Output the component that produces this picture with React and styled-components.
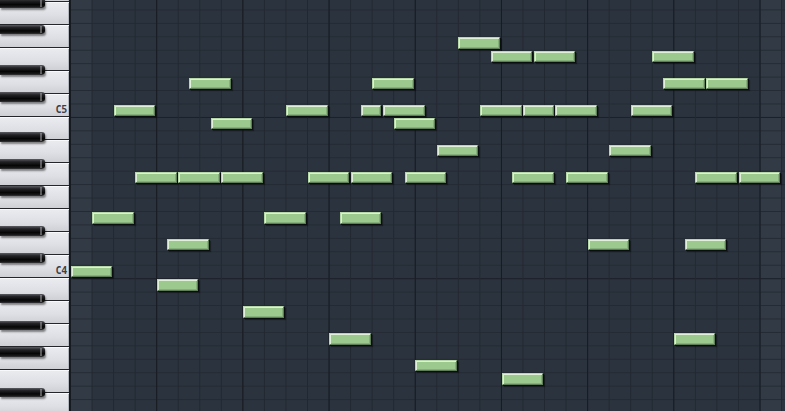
import React from 'react'
import styled, { createGlobalStyle } from 'styled-components'

// piano roll geometry, in px
const ROW = 13.44
const COL = 21.55
const TOP = -4 // top edge of the first (G#5) row
const OCTAVE = ROW * 12
const BLACK_ROWS = [1, 3, 5, 8, 10]
const WHITE_NAMES = ['B', 'A', 'G', 'F', 'E', 'D', 'C']

// [column, row, length in columns]
const notes = [
  [18, 3, 2],
  [19.5, 4, 2], [21.5, 4, 2], [27, 4, 2],
  [5.5, 6, 2], [14, 6, 2], [27.5, 6, 2], [29.5, 6, 2],
  [2, 8, 2], [10, 8, 2], [13.5, 8, 1], [14.5, 8, 2], [19, 8, 2], [21, 8, 1.5], [22.5, 8, 2], [26, 8, 2],
  [6.5, 9, 2], [15, 9, 2],
  [17, 11, 2], [25, 11, 2],
  [3, 13, 2], [5, 13, 2], [7, 13, 2], [11, 13, 2], [13, 13, 2], [15.5, 13, 2], [20.5, 13, 2], [23, 13, 2], [29, 13, 2], [31, 13, 2],
  [1, 16, 2], [9, 16, 2], [12.5, 16, 2],
  [4.5, 18, 2], [24, 18, 2], [28.5, 18, 2],
  [0, 20, 2],
  [4, 21, 2],
  [8, 23, 2],
  [12, 25, 2], [28, 25, 2],
  [16, 27, 2],
  [20, 28, 2],
]

const GlobalStyle = createGlobalStyle`
  html, body {
    margin: 0;
    padding: 0;
    background: #2b333e;
    overflow: hidden;
  }

  #root {
    width: 785px;
    height: 411px;
  }
`

const Roll = styled.div`
  display: flex;
  width: 785px;
  height: 411px;
  overflow: hidden;
  font-family: 'DejaVu Sans Mono', 'Liberation Mono', monospace;
`

const Keyboard = styled.div`
  flex: 0 0 69px;
  display: flex;
  flex-direction: column;
  overflow: hidden;
  border-right: 1px solid #15191e;
  background: #dcdde2;
`

const Octave = styled.div`
  position: relative;
  flex: 0 0 ${OCTAVE}px;
  display: flex;
  flex-direction: column;

  &:first-child {
    margin-top: ${TOP - 3 * ROW}px;
  }
`

const WhiteKey = styled.div`
  flex: 1;
  display: flex;
  align-items: flex-end;
  justify-content: flex-end;
  padding: 0 2px 1px 0;
  box-sizing: border-box;
  background: linear-gradient(to bottom, #ebecf0 0%, #dedfe4 60%, #cfd0d6 100%);
  border-bottom: 1px solid #24262b;
  box-shadow: inset 0 1px 0 #f8f9fb, inset -1px 0 0 #b5b7be;
`

const KeyLabel = styled.span`
  font-size: 10px;
  font-weight: bold;
  line-height: 1;
  letter-spacing: -0.3px;
  color: #3c3f48;
`

const BlackKey = styled.div`
  position: absolute;
  left: 0;
  top: ${p => p.$row * ROW + 2}px;
  width: 45px;
  height: 9.5px;
  border-radius: 0 3px 3px 0;
  background: linear-gradient(
    to bottom,
    #5c5d62 0%,
    #232326 28%,
    #060606 65%,
    #19191b 88%,
    #3a3a3e 100%
  );
  box-shadow: 1px 2px 2px rgba(0, 0, 0, 0.45);

  &::after {
    content: '';
    position: absolute;
    right: 3px;
    top: 1px;
    bottom: 1px;
    width: 2px;
    background: rgba(190, 190, 196, 0.45);
  }
`

const Grid = styled.div`
  position: relative;
  flex: 1;
  background-color: #2b333e;
  background-image:
    linear-gradient(to right, #161b21 1px, transparent 1px),
    linear-gradient(to right, #212830 1px, transparent 1px),
    linear-gradient(to bottom, #1c2128 1px, transparent 1px),
    linear-gradient(to bottom, #232a33 1px, transparent 1px),
    linear-gradient(to right, rgba(255, 255, 255, 0.035) ${COL}px, transparent ${COL}px);
  background-size:
    ${COL * 4}px 100%,
    ${COL}px 100%,
    100% ${OCTAVE}px,
    100% ${ROW}px,
    ${COL * 32}px 100%;
  background-position:
    0 0,
    0 0,
    0 ${TOP + 9 * ROW}px,
    0 ${TOP}px,
    0 0;
`

const Note = styled.div`
  position: absolute;
  left: ${p => 0.5 + p.$col * COL}px;
  top: ${p => TOP + p.$row * ROW + 1}px;
  width: ${p => p.$len * COL - 1.5}px;
  height: 11.5px;
  box-sizing: border-box;
  background: #9cca8e;
  border: 1px solid #5f7d58;
  border-top-color: #b7d7aa;
  border-left-color: #b7d7aa;
  box-shadow:
    inset 1px 1px 0 #e0f0d8,
    inset -1px -1px 0 #86b079,
    1px 1px 0 #0c0f12,
    2px 2px 1px rgba(0, 0, 0, 0.35);
`

// the C key of the lowest octave lies below the window, so it gets no label
const OctaveKeys = ({ label }) => (
  <Octave>
    {WHITE_NAMES.map(name => (
      <WhiteKey key={name}>
        {name === 'C' && label && <KeyLabel>{label}</KeyLabel>}
      </WhiteKey>
    ))}
    {BLACK_ROWS.map(row => (
      <BlackKey key={row} $row={row} />
    ))}
  </Octave>
)

const App = () => (
  <>
    <GlobalStyle />
    <Roll>
      <Keyboard>
        <OctaveKeys label="C5" />
        <OctaveKeys label="C4" />
        <OctaveKeys />
      </Keyboard>
      <Grid>
        {notes.map(([col, row, len], i) => (
          <Note key={i} $col={col} $row={row} $len={len} />
        ))}
      </Grid>
    </Roll>
  </>
)

export default App
